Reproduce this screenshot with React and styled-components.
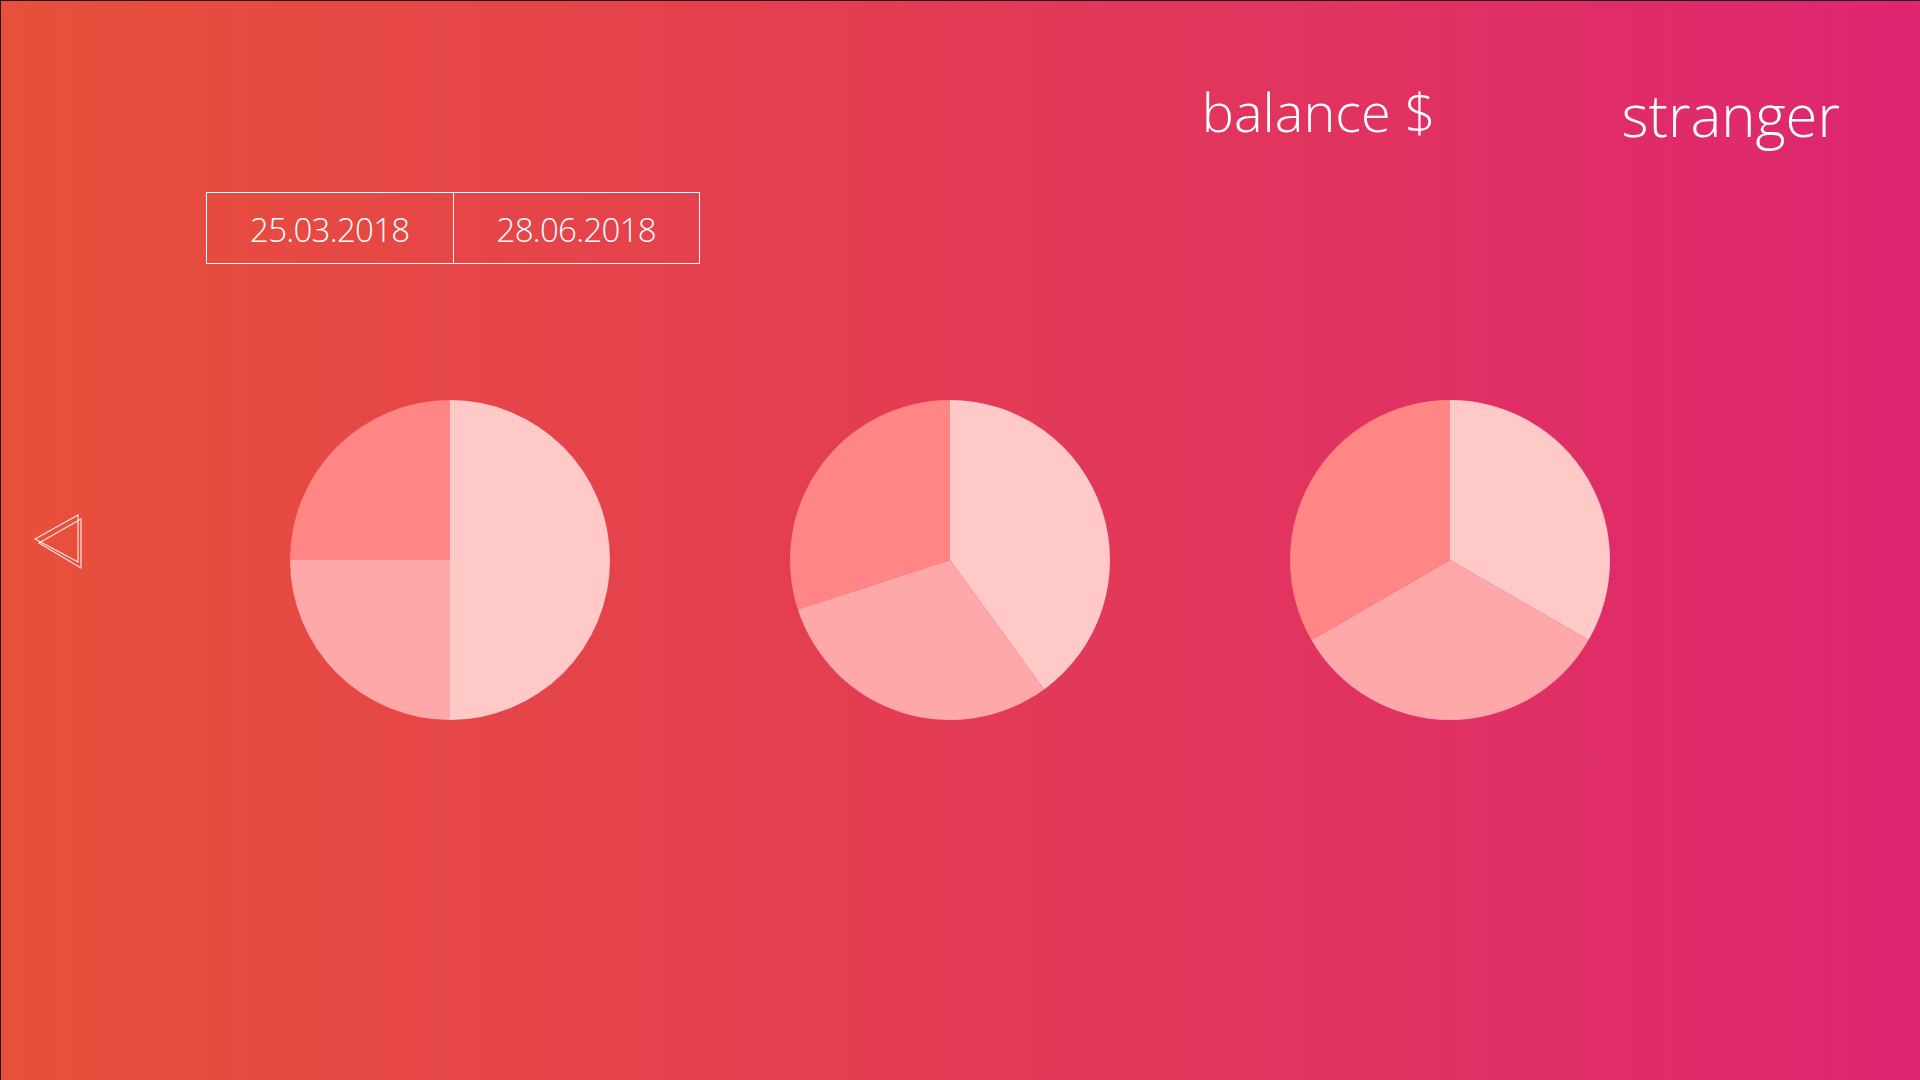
import React from 'react'
import styled, { createGlobalStyle } from 'styled-components'

const textFont = `"Open Sans", "Noto Sans", sans-serif`;
const lightSlice = '#ffc9c8';
const midSlice = '#ffa8aa';
const darkSlice = '#ff8684';

const GlobalStyle = createGlobalStyle`
  html, body {
    margin: 0;
    padding: 0;
  }
  body {
    font-family: ${textFont};
    color: #fff;
  }
`

const Page = styled.div`
  width: 1920px;
  height: 1080px;
  box-sizing: border-box;
  border-top: 1px solid #1c1c1c;
  border-left: 1px solid #1c1c1c;
  background: linear-gradient(90deg, #e8503a 0%, #e33b55 50%, #de2671 100%);
  display: flex;
  flex-direction: column;
  overflow: hidden;
`

const Header = styled.header`
  display: flex;
  justify-content: flex-end;
  align-items: flex-start;
  padding: 83px 80px 0 0;
  gap: 186px;
  height: 120px;
  box-sizing: border-box;
`

const HeaderItem = styled.div`
  font-size: ${p => p.$size}px;
  font-weight: 300;
  line-height: 1;
  margin-top: ${p => p.$offset || 0}px;
`

const DateRange = styled.div`
  display: flex;
  margin: 71px 0 0 205px;
  width: 494px;
  height: 72px;
  box-sizing: border-box;
  border: 1px solid #fff;
`

const DateCell = styled.div`
  flex: 1;
  display: flex;
  align-items: center;
  justify-content: center;
  padding-top: 2px;
  font-size: 33px;
  font-weight: 300;
  letter-spacing: -0.7px;
  & + & {
    border-left: 1px solid #fff;
  }
`

const Main = styled.div`
  display: flex;
  align-items: center;
  margin-top: 136px;
  padding-left: 30px;
`

const BackButton = styled.button`
  background: none;
  border: none;
  padding: 0;
  width: 54px;
  height: 62px;
  cursor: pointer;
  margin-top: -37px;
`

const Charts = styled.div`
  display: flex;
  gap: 180px;
  margin-left: 205px;
`

const Pie = ({ parts }) => {
  const r = 160;
  let angle = -90;
  const total = parts.reduce((s, p) => s + p.value, 0);
  const pt = a => [r + r * Math.cos(a * Math.PI / 180), r + r * Math.sin(a * Math.PI / 180)];
  return (
    <svg width="320" height="320" viewBox="0 0 320 320">
      {parts.map((p, i) => {
        const sweep = p.value / total * 360;
        const [x1, y1] = pt(angle);
        const [x2, y2] = pt(angle + sweep);
        const large = sweep > 180 ? 1 : 0;
        angle += sweep;
        return (
          <path key={i} fill={p.color}
            d={`M${r} ${r} L${x1} ${y1} A${r} ${r} 0 ${large} 1 ${x2} ${y2} Z`} />
        );
      })}
    </svg>
  );
}

const charts = [
  [50, 25, 25],
  [40, 30, 30],
  [1, 1, 1],
]

const App = () =>
  <Page>
    <GlobalStyle />
    <Header>
      <HeaderItem $size={54}>balance $</HeaderItem>
      <HeaderItem $size={58} $offset={2}>stranger</HeaderItem>
    </Header>
    <DateRange>
      <DateCell>25.03.2018</DateCell>
      <DateCell>28.06.2018</DateCell>
    </DateRange>
    <Main>
      <BackButton aria-label="back">
        <svg width="54" height="62" viewBox="0 0 54 62" fill="none" stroke="#fff" strokeWidth="1.2" strokeOpacity="0.85">
          <polygon points="4,28 47,4 47,51" />
          <polygon points="8,32 50,8 50,57" />
        </svg>
      </BackButton>
      <Charts>
        {charts.map((c, i) =>
          <Pie key={i} parts={[
            { value: c[0], color: lightSlice },
            { value: c[1], color: midSlice },
            { value: c[2], color: darkSlice },
          ]} />
        )}
      </Charts>
    </Main>
  </Page>

export default App
